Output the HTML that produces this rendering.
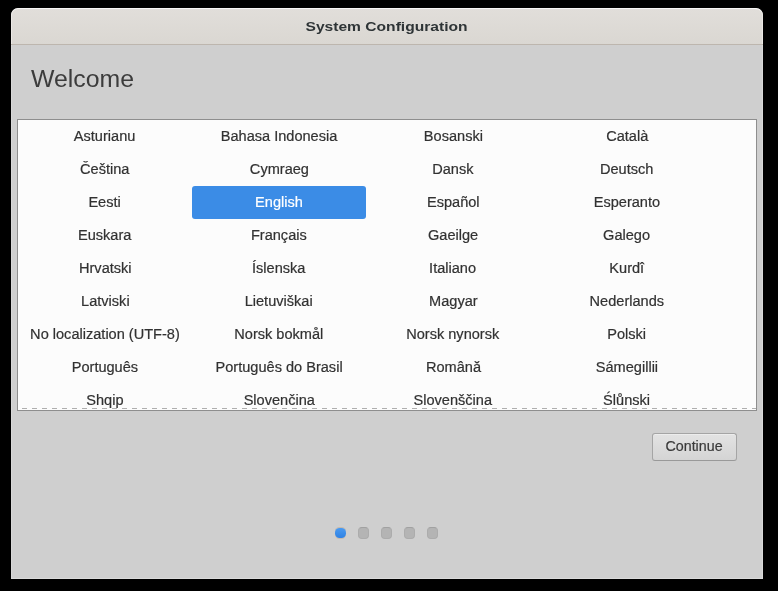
<!DOCTYPE html>
<html><head><meta charset="utf-8">
<style>
*{box-sizing:border-box;margin:0;padding:0}
html,body{width:778px;height:591px;overflow:hidden;background:#000}
body{position:relative;font-family:"Liberation Sans",sans-serif;-webkit-font-smoothing:antialiased}
#win span{will-change:transform}
.c span,#btn span{-webkit-text-stroke:0.2px currentColor}
#win{position:absolute;left:11px;top:8px;width:752px;height:571px;background:#cfcfcf;border-radius:7px 7px 0 0;overflow:hidden}
#win::after{content:"";position:absolute;left:0;top:37px;right:0;bottom:0;border-right:1px solid #dadada;border-bottom:1px solid #dadada;border-left:1px solid #d8d8d8;pointer-events:none}
#hdr{position:absolute;left:0;top:0;width:752px;height:37px;background:linear-gradient(#e1deda,#dad7d2);border-top:1px solid #f7f6f5;border-bottom:1px solid #bdb6ae;border-radius:7px 7px 0 0;box-shadow:inset 1px 0 0 #ebe8e5,inset -1px 0 0 #ebe8e5}
#title{position:absolute;left:0;top:0;width:752px;text-align:center;font-weight:bold;font-size:13px;color:#2e3436;line-height:36px}
#welcome{position:absolute;left:20px;top:58px;font-size:23px;color:#3c3c3c;white-space:nowrap}
#list{position:absolute;left:6px;top:111px;width:740px;height:292px;border:1px solid #8e8e8e;background:#fcfcfc;overflow:hidden}
.row{position:absolute;left:0;height:33px;width:738px}
.c{position:absolute;top:0;width:174px;height:33px;line-height:33px;text-align:center;font-size:14px;color:#323232;white-space:nowrap}
.c span,#title span,#btn span,#welcome span{display:inline-block}
.c span{transform:scaleX(1.04)}
#title span{transform:scaleX(1.2)}
#btn span{transform:scaleX(1.02)}
#welcome span{transform:scaleX(1.08);transform-origin:0 50%}
.sel{background:#3b8ce6;color:#fff;border-radius:3px}
#dash{position:absolute;left:4px;top:288px;width:734px;height:1px;background:repeating-linear-gradient(90deg,#afafaf 0 5px,transparent 5px 10px)}
#btn{position:absolute;left:641px;top:425px;width:85px;height:28px;border:1px solid #a5a5a5;border-bottom-color:#999;border-radius:3px;background:linear-gradient(#e3e3e3,#d4d4d4);box-shadow:inset 0 1px 0 rgba(255,255,255,.35);font-size:14px;color:#3a3a3a;text-align:center;line-height:25px}
.dot{position:absolute;top:519px;width:11px;height:12px;border-radius:4px;background:#b4b4b4;border:1px solid #acacac;border-top-color:#a1a1a1}
.dot.on{top:520px;height:10px;background:linear-gradient(#4a9af0,#2f82e4);border:none;border-radius:4.5px;box-shadow:0 -1px 0 rgba(185,160,135,.45),0 1px 0 rgba(185,160,135,.45)}
</style></head><body>
<div id="win">
  <div id="hdr"><div id="title"><span>System Configuration</span></div></div>
  <div id="welcome"><span>Welcome</span></div>
  <div id="list">
    <div class="row" style="top:0"><div class="c" style="left:0"><span>Asturianu</span></div><div class="c" style="left:174px"><span>Bahasa Indonesia</span></div><div class="c" style="left:348px"><span>Bosanski</span></div><div class="c" style="left:522px"><span>Català</span></div></div>
    <div class="row" style="top:33px"><div class="c" style="left:0"><span>Čeština</span></div><div class="c" style="left:174px"><span>Cymraeg</span></div><div class="c" style="left:348px"><span>Dansk</span></div><div class="c" style="left:522px"><span>Deutsch</span></div></div>
    <div class="row" style="top:66px"><div class="c" style="left:0"><span>Eesti</span></div><div class="c sel" style="left:174px"><span>English</span></div><div class="c" style="left:348px"><span>Español</span></div><div class="c" style="left:522px"><span>Esperanto</span></div></div>
    <div class="row" style="top:99px"><div class="c" style="left:0"><span>Euskara</span></div><div class="c" style="left:174px"><span>Français</span></div><div class="c" style="left:348px"><span>Gaeilge</span></div><div class="c" style="left:522px"><span>Galego</span></div></div>
    <div class="row" style="top:132px"><div class="c" style="left:0"><span>Hrvatski</span></div><div class="c" style="left:174px"><span>Íslenska</span></div><div class="c" style="left:348px"><span>Italiano</span></div><div class="c" style="left:522px"><span>Kurdî</span></div></div>
    <div class="row" style="top:165px"><div class="c" style="left:0"><span>Latviski</span></div><div class="c" style="left:174px"><span>Lietuviškai</span></div><div class="c" style="left:348px"><span>Magyar</span></div><div class="c" style="left:522px"><span>Nederlands</span></div></div>
    <div class="row" style="top:198px"><div class="c" style="left:0"><span>No localization (UTF-8)</span></div><div class="c" style="left:174px"><span>Norsk bokmål</span></div><div class="c" style="left:348px"><span>Norsk nynorsk</span></div><div class="c" style="left:522px"><span>Polski</span></div></div>
    <div class="row" style="top:231px"><div class="c" style="left:0"><span>Português</span></div><div class="c" style="left:174px"><span>Português do Brasil</span></div><div class="c" style="left:348px"><span>Română</span></div><div class="c" style="left:522px"><span>Sámegillii</span></div></div>
    <div class="row" style="top:264px"><div class="c" style="left:0"><span>Shqip</span></div><div class="c" style="left:174px"><span>Slovenčina</span></div><div class="c" style="left:348px"><span>Slovenščina</span></div><div class="c" style="left:522px"><span>Ślůnski</span></div></div>
    <div id="dash"></div>
  </div>
  <div id="btn"><span>Continue</span></div>
  <div class="dot on" style="left:324px"></div>
  <div class="dot" style="left:347px"></div>
  <div class="dot" style="left:370px"></div>
  <div class="dot" style="left:393px"></div>
  <div class="dot" style="left:416px"></div>
</div>
</body></html>
